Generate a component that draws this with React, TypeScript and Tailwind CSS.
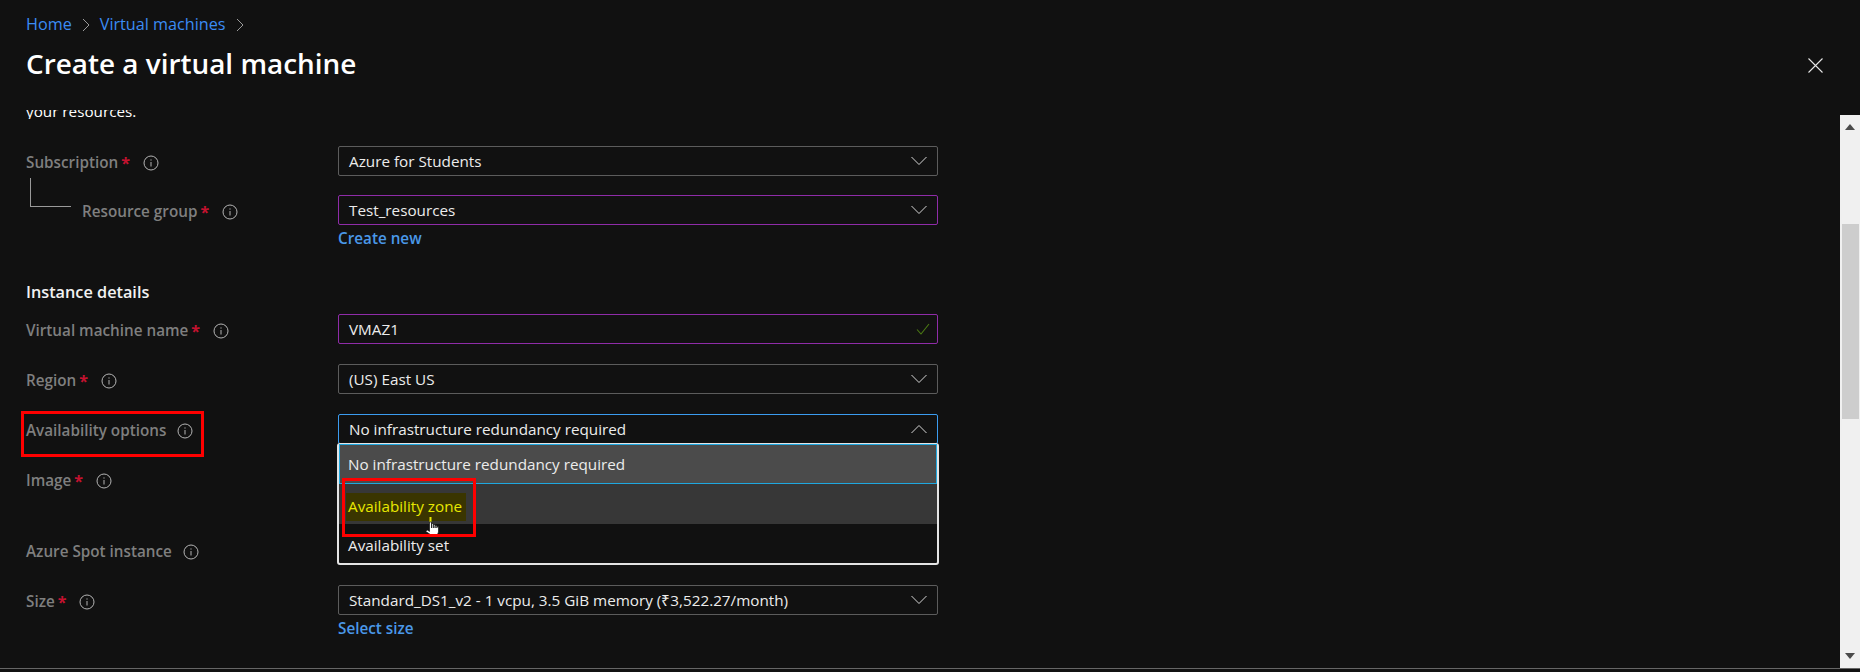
const font = "font-['Open_Sans',sans-serif]";

function Info() {
  return (
    <svg width="16" height="16" viewBox="0 0 16 16" fill="none" stroke="#b4b4b4" className="shrink-0">
      <circle cx="8" cy="8" r="7" strokeWidth="1" />
      <path d="M8 7v4.5" strokeWidth="1" />
      <path d="M8 4.4v1.2" strokeWidth="1" />
    </svg>
  );
}

function Chevron({ up }: { up?: boolean }) {
  return (
    <svg width="16" height="10" viewBox="0 0 16 10" fill="none" stroke="#d6d6d6" strokeWidth="1">
      <path d={up ? "M0.5 9 L8 1.5 L15.5 9" : "M0.5 1 L8 8.5 L15.5 1"} />
    </svg>
  );
}

function Label({ text, star, info, className }: { text: string; star?: boolean; info?: boolean; className?: string }) {
  return (
    <div className={`flex items-center text-[15.25px] font-semibold text-[#7f7f7f] ${className ?? ""}`}>
      <span>{text}</span>
      {star && <span className="ml-[3px] text-[16px] leading-none font-bold text-[#c4122f]">*</span>}
      {info !== false && <span className={star ? "ml-[13px]" : "ml-[11px]"}><Info /></span>}
    </div>
  );
}

function Field({ children, border = "border-[#5c5c5c]", right }: { children: React.ReactNode; border?: string; right?: React.ReactNode }) {
  return (
    <div className={`flex h-[30px] w-[600px] items-center justify-between rounded-[2px] border ${border} pl-[10px] pr-[10px] text-[15.25px] text-[#ececec]`}>
      <span className="pt-[1px]">{children}</span>
      {right ?? <Chevron />}
    </div>
  );
}

function Row({ label, field, mt }: { label: React.ReactNode; field?: React.ReactNode; mt: string }) {
  return (
    <div className={`flex h-[30px] ${mt}`}>
      <div className="flex w-[312px] shrink-0 items-center pt-[3px]">{label}</div>
      {field}
    </div>
  );
}

function Cursor() {
  return (
    <svg width="18" height="22" viewBox="0 0 18 22" className="absolute left-[86px] top-[73px]">
      <path d="M5.5 0v5" stroke="#e6e600" strokeWidth="2" />
      <path
        d="M4.5 5h2v6V6.5h1.8V11 7.5h1.8V11 8.5h1.8V11 9.5h1.6V15l-1.4 3.5c-.8 1.6-4.4 1.6-5.2 0L.8 14.5l1.4-1.6 2.3 1.5z"
        fill="#fff"
        stroke="#111"
        strokeWidth="0.7"
      />
    </svg>
  );
}

export default function App() {
  return (
    <div className={`flex h-[672px] w-[1860px] flex-col overflow-hidden bg-[#111111] ${font}`}>
      <header className="flex h-[110px] shrink-0 items-start justify-between pl-[26px]">
        <div>
          <nav className="mt-[12px] flex h-[24px] items-center pt-[1px] text-[16.2px] text-[#3b8cf5]">
            <span>Home</span>
            <svg width="8" height="14" viewBox="0 0 8 14" fill="none" stroke="#9a9a9a" className="mx-[10px]"><path d="M1 1l6 6-6 6" /></svg>
            <span>Virtual machines</span>
            <svg width="8" height="14" viewBox="0 0 8 14" fill="none" stroke="#9a9a9a" className="mx-[10px]"><path d="M1 1l6 6-6 6" /></svg>
          </nav>
          <h1 className="mt-[8px] text-[27.9px] leading-[38px] font-semibold text-white">Create a virtual machine</h1>
        </div>
        <svg width="15" height="15" viewBox="0 0 15 15" stroke="#e6e6e6" strokeWidth="1.1" className="mr-[37px] mt-[58px]">
          <path d="M0.5 0.5l14 14M14.5 0.5l-14 14" />
        </svg>
      </header>

      <div className="flex min-h-0 flex-1">
        <main className="min-w-0 flex-1 pl-[26px]">
          {/* the scrolled-away paragraph, only its last line's lower half shows */}
          <div className="h-[9px] overflow-hidden">
            <p className="-mt-[9px] text-[15.25px] leading-[20px] text-white">your resources.</p>
          </div>

          <Row
            mt="mt-[27px]"
            label={<Label text="Subscription" star />}
            field={<Field>Azure for Students</Field>}
          />
          <div className="relative mt-[19px]">
            <div className="absolute -top-[17px] left-[4px] h-[29px] w-[41px] border-b border-l border-[#9a9a9a]" />
            <Row
              mt="mt-0"
              label={<Label text="Resource group" star className="pl-[56px]" />}
              field={<Field border="border-[#8f2ca8]">Test_resources</Field>}
            />
          </div>
          <div className="ml-[312px] mt-[3px] text-[15.25px] leading-[20px] font-semibold text-[#4a98e8]">Create new</div>

          <h2 className="mt-[33px] text-[16.25px] leading-[22px] font-semibold text-[#f2f2f2]">Instance details</h2>

          <Row
            mt="mt-[11px]"
            label={<Label text="Virtual machine name" star />}
            field={
              <Field
                border="border-[#8f2ca8]"
                right={
                  <svg width="14" height="12" viewBox="0 0 14 12" fill="none" stroke="#4c7a14" strokeWidth="1.1" className="mr-[-3px]">
                    <path d="M1 6.5l4 4.5 8-10" />
                  </svg>
                }
              >
                VMAZ1
              </Field>
            }
          />
          <Row mt="mt-[20px]" label={<Label text="Region" star />} field={<Field>(US) East US</Field>} />
          <Row
            mt="mt-[20px]"
            label={
              <div className="relative">
                <Label text="Availability options" />
                <div className="absolute -left-[5px] -top-[8px] h-[46px] w-[183px] border-[3px] border-[#ff0000]" />
              </div>
            }
            field={
              <div className="relative">
                <Field border="border-[#3b9cf0]" right={<Chevron up />}>
                  No infrastructure redundancy required
                </Field>
                <div className="absolute -left-[1px] top-[29px] z-10 h-[122px] w-[602px] rounded-[3px] border-x-2 border-t border-b-2 border-[#e4e4e4] bg-[#111111] text-[15.25px] text-[#ececec]">
                  <div className="flex h-[40px] items-center border border-[#1fa8e0] bg-[#4b4b4b] pl-[8px] pt-[1px]">No infrastructure redundancy required</div>
                  <div className="flex h-[40px] items-start bg-[#373737] pl-[7px] pt-[9px]">
                    <span className="flex h-[28px] items-center bg-[#3a3500] pb-[1px] pl-[2px] pr-[4px] text-[#e8e800]">Availability zone</span>
                  </div>
                  <div className="flex h-[39px] items-center pl-[9px] pt-[3px]">Availability set</div>
                  <Cursor />
                  <div className="absolute left-[3px] top-[34px] h-[59px] w-[134px] border-[3px] border-[#ff0000]" />
                </div>
              </div>
            }
          />
          <Row mt="mt-[20px]" label={<Label text="Image" star />} />
          <Row mt="mt-[41px]" label={<Label text="Azure Spot instance" />} />
          <Row
            mt="mt-[20px]"
            label={<Label text="Size" star />}
            field={<Field>Standard_DS1_v2 - 1 vcpu, 3.5 GiB memory (₹3,522.27/month)</Field>}
          />
          <div className="ml-[312px] mt-[3px] text-[15.25px] leading-[20px] font-semibold text-[#4a98e8]">Select size</div>
        </main>

        <div className="mt-[5px] flex w-[20px] shrink-0 flex-col items-center bg-[#f0f0f0]">
          <svg width="10" height="6" viewBox="0 0 10 6" className="mt-[9px]"><path d="M5 0l5 6H0z" fill="#4a4a4a" /></svg>
          <div className="ml-[1px] mt-[94px] h-[195px] w-[17px] bg-[#cdcdcd]" />
          <svg width="10" height="6" viewBox="0 0 10 6" className="mb-[9px] mt-auto"><path d="M0 0h10L5 6z" fill="#4a4a4a" /></svg>
        </div>
      </div>

      <div className="mb-[3px] h-[1px] shrink-0 bg-[#666666]" />
    </div>
  );
}
